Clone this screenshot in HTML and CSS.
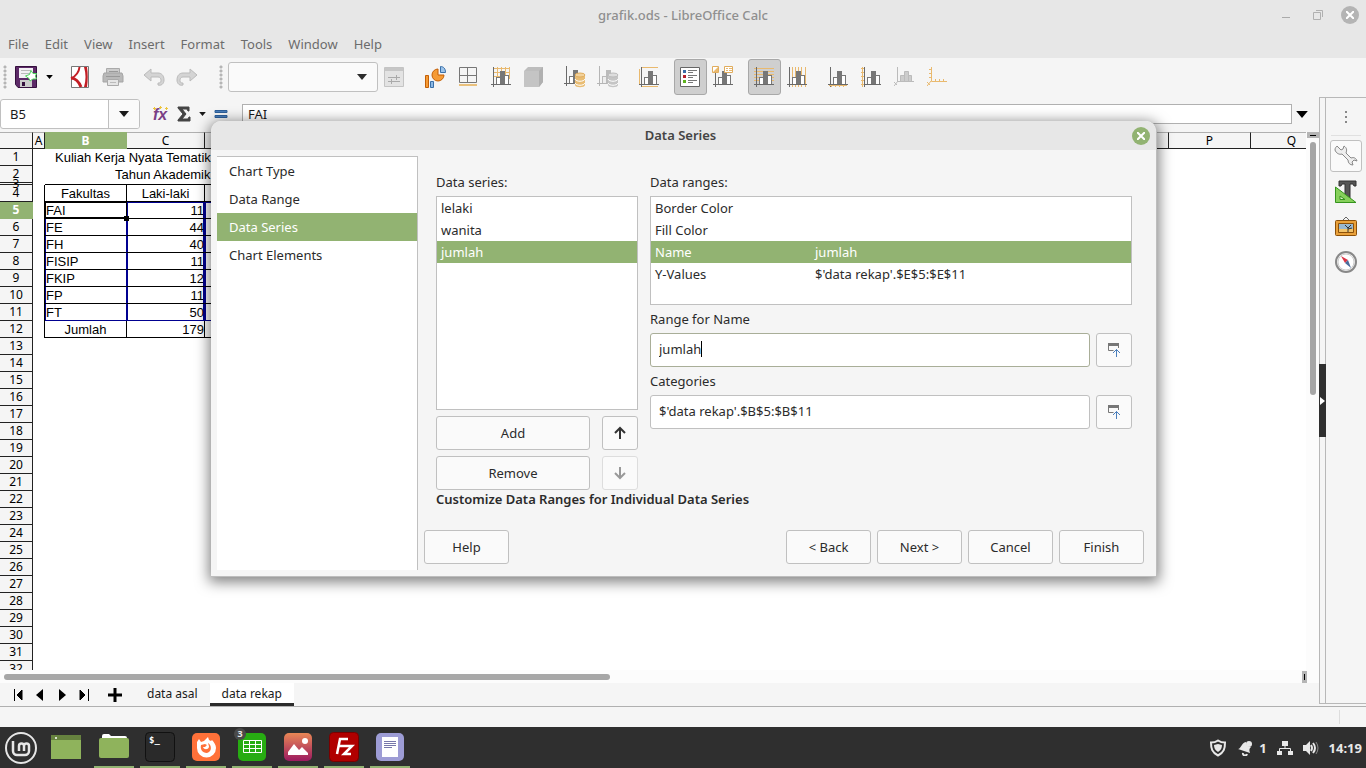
FILE: index.html
```html
<!DOCTYPE html>
<html lang="en">
<head>
    <meta charset="UTF-8">
    <meta name="viewport" content="width=device-width, initial-scale=1.0">
    <title>grafik.ods - LibreOffice Calc</title>
    <link rel="stylesheet" href="styles.css">
</head>
<body>
    <!-- shared icon shapes -->
    <svg class="defs" aria-hidden="true">
        <symbol id="bars" viewBox="0 0 20 20">
            <rect x="5.5" y="10.5" width="4" height="7" fill="#fff" stroke="#777"/>
            <rect x="13.5" y="8.5" width="4" height="9" fill="#fff" stroke="#777"/>
            <rect x="9" y="4" width="5" height="14" fill="#777"/>
            <path d="M2.5 0v20M0 17.5h20" stroke="#6a6a6a" fill="none"/>
        </symbol>
        <symbol id="bars-off" viewBox="0 0 20 20">
            <rect x="5.5" y="10.5" width="4" height="7" fill="#eee" stroke="#bbb"/>
            <rect x="13.5" y="8.5" width="4" height="9" fill="#ddd" stroke="#bbb"/>
            <rect x="9" y="4" width="5" height="14" fill="#bbb"/>
            <path d="M2.5 0v20M0 17.5h20" stroke="#b5b5b5" fill="none"/>
        </symbol>
        <symbol id="caret" viewBox="0 0 10 6"><path d="M0 0h10L5 6z" fill="currentColor"/></symbol>
        <symbol id="shrink" viewBox="0 0 14 14">
            <path d="M1.5 1v6.500h5M11.500 1v4" fill="none" stroke="#777"/>
            <path d="M1 0h11v3H1z" fill="#777"/>
            <path d="M9.500 14V6.500M6 10l3.500-3.500L13 10" fill="none" stroke="#4a7ebb"/>
        </symbol>
    </svg>

    <header class="titlebar">
        <span class="title">grafik.ods - LibreOffice Calc</span>
        <div class="window-buttons">
            <button type="button" aria-label="Minimize"><svg width="10" height="12"><path d="M1 8.5h8" stroke="#aaa"/></svg></button>
            <button type="button" aria-label="Restore"><svg width="10" height="12"><path d="M.5 3.5h7v7h-7zM3 1.5h6.5V8" fill="none" stroke="#b0b0b0"/></svg></button>
            <button type="button" class="close" aria-label="Close"><svg width="8" height="8"><path d="M0 0l8 8M8 0L0 8" stroke="#fff" stroke-width="2"/></svg></button>
        </div>
    </header>

    <nav class="menubar">
        <button type="button">File</button>
        <button type="button">Edit</button>
        <button type="button">View</button>
        <button type="button">Insert</button>
        <button type="button">Format</button>
        <button type="button">Tools</button>
        <button type="button">Window</button>
        <button type="button">Help</button>
    </nav>

    <div class="toolbar">
        <div class="tool-group first-group">
            <span class="grip"></span>
            <button type="button" class="tool" aria-label="Save">
                <svg width="22" height="22" viewBox="0 0 22 22"><path d="M.5.5h21v21H3l-2.500-3z" fill="#5d2a68" stroke="#35103e"/><path d="M4 2h14v10H4z" fill="#f3f1f4"/><path d="M6 4.5h10M6 7.5h10" stroke="#bbb"/><path d="M5 14h12v7H5z" fill="#ccc"/><path d="M7 16h3v4H7z" fill="#35103e"/><path d="M16 4.500l2 3h3.500l-1 2.500 1 3H18l-3 2-1-2.500L10.500 10l4-1.500z" fill="#fff" stroke="#4bd15b"/></svg>
            </button>
            <button type="button" class="drop" aria-label="Save options"><svg width="7" height="4"><use href="#caret"/></svg></button>
            <span class="sep"></span>
            <button type="button" class="tool" aria-label="Export as PDF">
                <svg width="20" height="22" viewBox="0 0 20 22"><path d="M1.5.5h17v21h-17z" fill="#fff" stroke="#777"/><path d="M9.500 1C9 6 6 10 1 12.500" fill="none" stroke="#c31f26" stroke-width="2"/><path d="M1 12c4 0 8 4 10 9" fill="none" stroke="#c31f26" stroke-width="3"/><path d="M14 1c2 7 2 13 0 20h3c1-7 1-13 0-20z" fill="#c31f26"/></svg>
            </button>
            <button type="button" class="tool" aria-label="Print">
                <svg width="22" height="20" viewBox="0 0 22 20"><path d="M4.5 1.500h13v6h-13z" fill="#ccc" stroke="#aaa"/><path d="M2 6h18l1 3v6H1V9z" fill="#b9b9b9" stroke="#a5a5a5"/><path d="M7 4.5h9M4 9.5h14" stroke="#999"/><path d="M5.500 12.500h11v6h-11z" fill="#e5e5e5" stroke="#aaa"/><path d="M8 15.5h6" stroke="#bbb"/></svg>
            </button>
            <span class="sep"></span>
            <button type="button" class="tool" aria-label="Undo">
                <svg width="22" height="18" viewBox="0 0 22 18"><path d="M8 1L1 7l7 6V9h7c3 0 3 3 3 4 0 2-2 2-3 2v2c3 1 6-1 6-5 0-5-3-7-6-7H8z" fill="#d4d4d4" stroke="#bbb"/></svg>
            </button>
            <button type="button" class="tool" aria-label="Redo">
                <svg width="22" height="18" viewBox="0 0 22 18"><path d="M14 1l7 6-7 6V9H7c-3 0-3 3-3 4 0 2 2 2 3 2v2c-3 1-6-1-6-5 0-5 3-7 6-7h7z" fill="#d4d4d4" stroke="#bbb"/></svg>
            </button>
        </div>
        <div class="tool-group">
            <span class="grip"></span>
            <div class="select-wrap">
                <select aria-label="Select chart element"><option></option></select>
                <svg width="10" height="6"><use href="#caret"/></svg>
            </div>
            <button type="button" class="tool" aria-label="Format selection" disabled>
                <svg width="20" height="20"><path d="M.5.5h19v19H.5z" fill="#e3e3e3" stroke="#c4c4c4"/><path d="M1 1h18v3H1z" fill="#c6c6c6"/><path d="M4 10.5h12M4 14.5h12M12.5 8v5M7.5 12v5" stroke="#aaa"/></svg>
            </button>
            <span class="sep"></span>
            <button type="button" class="tool" aria-label="Chart type">
                <svg width="22" height="22"><path d="M1.5 9.5h3v12h-3z" fill="#f59b35" stroke="#c35f06"/><path d="M6.5 15.5h3v6h-3z" fill="#8cb8e4" stroke="#3a70a8"/><path d="M14 3a6 6 0 1 0 6 6h-6z" fill="#f59b35" stroke="#c35f06"/><path d="M16.5 .5v6h5c0-4-2-6-5-6z" fill="#9cc3ea" stroke="#3a70a8"/></svg>
            </button>
            <button type="button" class="tool" aria-label="Chart area">
                <svg width="20" height="20"><path d="M1.5.5h17v15h-17zM9.5 1v15M1 8.5h18" fill="none" stroke="#777"/><path d="M1 18h18" stroke="#e9c07c" stroke-width="2"/></svg>
            </button>
            <button type="button" class="tool" aria-label="Chart wall">
                <svg width="20" height="20"><path d="M3 1.5h16M3 5.5h16M3 9.5h16M6.5 0v14M10.5 0v14M14.5 0v14M18.5 0v12" stroke="#e9b96e"/><use href="#bars"/></svg>
            </button>
            <button type="button" class="tool" aria-label="3D view" disabled>
                <svg width="20" height="20"><path d="M4 0h15v15l-4 5H1q-1 0-1-1V4z" fill="#bdbdbd"/><path d="M0 4h15v16H1q-1 0-1-1z" fill="#c4c4c4"/><path d="M15 4l4-4v15l-4 5z" fill="#b0b0b0"/></svg>
            </button>
            <span class="sep"></span>
            <button type="button" class="tool" aria-label="Data ranges">
                <svg width="22" height="22"><use href="#bars" width="20" height="20"/><path d="M11 9v10c0 3 10 3 10 0V9z" fill="#e9bd74"/><ellipse cx="16" cy="9" rx="5" ry="2" fill="#f2d29b" stroke="#e0ac5d"/><path d="M11 13c1 3 9 3 10 0M11 17c1 3 9 3 10 0" fill="none" stroke="#fff"/></svg>
            </button>
            <button type="button" class="tool" aria-label="Data table" disabled>
                <svg width="22" height="22"><use href="#bars-off" width="20" height="20"/><path d="M11 9v10c0 3 10 3 10 0V9z" fill="#c5c5c5"/><ellipse cx="16" cy="9" rx="5" ry="2" fill="#ddd" stroke="#bbb"/><path d="M11 13c1 3 9 3 10 0M11 17c1 3 9 3 10 0" fill="none" stroke="#fff"/></svg>
            </button>
            <span class="sep"></span>
            <button type="button" class="tool" aria-label="Titles">
                <svg width="20" height="20"><path d="M3 .5h16M3 19.5h16M.5 2v15" stroke="#e9b96e"/><use href="#bars"/></svg>
            </button>
            <span class="sep"></span>
            <button type="button" class="tool pressed" aria-label="Legend">
                <svg width="20" height="20"><path d="M.5.5h19v19H.5z" fill="#fff" stroke="#666"/><path d="M3 3h3v3H3z" fill="#3b6fa8"/><path d="M3 8h3v3H3z" fill="#b5222f"/><path d="M3 13h3v3H3z" fill="#5eb31e"/><path d="M8 3.5h9M8 5.5h5M8 8.5h9M8 10.5h5M8 13.5h9M8 15.5h5" stroke="#777"/></svg>
            </button>
            <button type="button" class="tool" aria-label="Data labels">
                <svg width="22" height="22"><use href="#bars" x="1" y="1" width="20" height="20"/><path d="M.5.5h6v6h-6zM12.5.5h8v6h-8z" fill="#fff" stroke="#e0ac5d"/><path d="M1 6l5-5v5z" fill="#e9b96e"/><path d="M14 2.5h2M14 4.5h2M17 2.5h3M17 4.5h3" stroke="#e9b96e"/></svg>
            </button>
            <span class="sep"></span>
            <button type="button" class="tool pressed" aria-label="Horizontal grids">
                <svg width="20" height="20"><path d="M0 1.5h20M0 4.5h20M0 7.5h20M0 10.5h20M0 13.5h20" stroke="#e9b96e"/><use href="#bars"/></svg>
            </button>
            <button type="button" class="tool" aria-label="Vertical grids">
                <svg width="20" height="20"><path d="M5.5 0v20M8.5 0v20M11.5 0v20M14.5 0v20M18.5 0v20" stroke="#e9b96e"/><use href="#bars"/></svg>
            </button>
            <span class="sep"></span>
            <button type="button" class="tool" aria-label="X axis">
                <svg width="20" height="20"><use href="#bars"/><path d="M1 18.5h18M3.5 18v2M7.5 18v2M11.5 18v2M15.5 18v2" stroke="#e9b96e"/></svg>
            </button>
            <button type="button" class="tool" aria-label="Y axis">
                <svg width="20" height="20"><use href="#bars" x="1" width="20" height="20"/><path d="M1.5 0v20M0 1.5h3M0 5.5h3M0 9.5h3M0 13.5h3M0 17.5h3" stroke="#e9b96e"/></svg>
            </button>
            <button type="button" class="tool" aria-label="Z axis" disabled>
                <svg width="20" height="20"><path d="M3.5 0v14.5H20M4 14l-4 5" fill="none" stroke="#bbb"/><path d="M6.5 8.5h4v6h-4zM10.5 4.5h4v10h-4zM14.5 8.5h3v6h-3z" fill="#ccc" stroke="#bbb"/><path d="M0 15l3 3" stroke="#bbb"/></svg>
            </button>
            <button type="button" class="tool" aria-label="All axes">
                <svg width="20" height="20"><path d="M4.5 0v14.5H20M4 14l-4 5M2 2.5h3M2 6.5h3M2 10.5h3M8.5 12v3M12.5 12v3M16.5 12v3M0 15l3 3" fill="none" stroke="#e9b96e"/></svg>
            </button>
        </div>
    </div>

    <div class="workspace">
        <main class="document">
            <div class="formula-bar">
                <div class="name-box">
                    <input type="text" value="B5" aria-label="Name box">
                    <button type="button" aria-label="Named ranges"><svg width="10" height="6"><use href="#caret"/></svg></button>
                </div>
                <div class="formula-tools">
                    <button type="button" aria-label="Function wizard"><svg width="18" height="18"><text x="1" y="15" class="fx">fx</text><path d="M1 3.500h3M7 2.500h3M13 3.500h3M2.500 2v3M8.500 1v3M14.500 2v3" stroke="#edc53d"/></svg></button>
                    <button type="button" aria-label="Sum"><svg width="14" height="16"><path d="M1 1h11v4h-1l-1-2H5l4 5-4 5h6l1-2h1v4H1v-1l5-6-5-6z" fill="#444" stroke="#444"/></svg></button>
                    <button type="button" class="narrow" aria-label="Sum options"><svg width="7" height="4"><use href="#caret"/></svg></button>
                    <button type="button" aria-label="Formula"><svg width="14" height="10"><path d="M1 1.5h12v2H1zM1 6.5h12v2H1z" fill="#4a7ebb" stroke="#2d5f99"/></svg></button>
                </div>
                <input type="text" class="formula-input" value="FAI" aria-label="Input line">
                <button type="button" class="expand" aria-label="Expand formula bar"><svg width="12" height="7"><use href="#caret"/></svg></button>
            </div>

            <div class="sheet-area">
                <div class="sheet">
                    <table>
                        <colgroup>
                            <col class="col-head"><col class="col-a"><col class="col-b"><col class="col-c"><col class="col-c"><col><col class="col-b"><col class="col-b">
                        </colgroup>
                        <thead>
                            <tr><th></th><th>A</th><th class="current">B</th><th>C</th><th></th><th></th><th>P</th><th>Q</th></tr>
                        </thead>
                        <tbody>
                            <tr><th>1</th><td></td><td colspan="3" class="heading">Kuliah Kerja Nyata Tematik</td></tr>
                            <tr><th>2</th><td></td><td colspan="3" class="heading subheading">Tahun Akademik</td></tr>
                            <tr class="collapsed"><th><span>3</span></th><td></td><td colspan="3"></td></tr>
                            <tr class="boxed top center"><th>4</th><td></td><td>Fakultas</td><td>Laki-laki</td><td></td></tr>
                            <tr class="boxed range range-top"><th class="current">5</th><td></td><td class="cursor">FAI</td><td>11</td><td></td></tr>
                            <tr class="boxed range"><th>6</th><td></td><td>FE</td><td>44</td><td></td></tr>
                            <tr class="boxed range"><th>7</th><td></td><td>FH</td><td>40</td><td></td></tr>
                            <tr class="boxed range"><th>8</th><td></td><td>FISIP</td><td>11</td><td></td></tr>
                            <tr class="boxed range"><th>9</th><td></td><td>FKIP</td><td>12</td><td></td></tr>
                            <tr class="boxed range"><th>10</th><td></td><td>FP</td><td>11</td><td></td></tr>
                            <tr class="boxed range range-bottom"><th>11</th><td></td><td>FT</td><td>50</td><td></td></tr>
                            <tr class="boxed total"><th>12</th><td></td><td>Jumlah</td><td>179</td><td></td></tr>
                            <tr><th>13</th></tr>
                            <tr><th>14</th></tr>
                            <tr><th>15</th></tr>
                            <tr><th>16</th></tr>
                            <tr><th>17</th></tr>
                            <tr><th>18</th></tr>
                            <tr><th>19</th></tr>
                            <tr><th>20</th></tr>
                            <tr><th>21</th></tr>
                            <tr><th>22</th></tr>
                            <tr><th>23</th></tr>
                            <tr><th>24</th></tr>
                            <tr><th>25</th></tr>
                            <tr><th>26</th></tr>
                            <tr><th>27</th></tr>
                            <tr><th>28</th></tr>
                            <tr><th>29</th></tr>
                            <tr><th>30</th></tr>
                            <tr><th>31</th></tr>
                            <tr><th>32</th></tr>
                        </tbody>
                    </table>
                </div>
                <div class="vscroll">
                    <span class="split"></span>
                    <span class="thumb"></span>
                </div>
            </div>
            <div class="hscroll">
                <span class="thumb"></span>
                <span class="split"></span>
            </div>
            <div class="sheet-tabs">
                <button type="button" aria-label="First sheet"><svg width="10" height="14"><path d="M1.5 1v12M9 2v10L4 7z" stroke="#000"/></svg></button>
                <button type="button" aria-label="Previous sheet"><svg width="10" height="14"><path d="M8 1v12L1 7z"/></svg></button>
                <button type="button" aria-label="Next sheet"><svg width="10" height="14"><path d="M2 1v12l7-6z"/></svg></button>
                <button type="button" aria-label="Last sheet"><svg width="10" height="14"><path d="M1 2v10l5-5zM9.5 1v12" stroke="#000"/></svg></button>
                <button type="button" class="add-sheet" aria-label="Add sheet"><svg width="16" height="16"><path d="M8 1v14M1 8h14" stroke="#000" stroke-width="3"/></svg></button>
                <button type="button" class="tab">data asal</button>
                <button type="button" class="tab active">data rekap</button>
            </div>
        </main>
        <div class="splitter">
            <button type="button" aria-label="Hide sidebar"><svg width="5" height="8"><path d="M0 0v8l5-4z" fill="#fff"/></svg></button>
        </div>
        <aside class="sidebar">
            <button type="button" class="more" aria-label="Sidebar settings"><svg width="3" height="14"><path d="M0 1h2v2H0zM0 6h2v2H0zM0 11h2v2H0z" fill="#888"/></svg></button>
            <button type="button" class="deck selected" aria-label="Properties">
                <svg width="24" height="24"><path d="M3 2l4 4 2-1 1-3c3 2 3 4 2 7l5 5c3-1 5 0 6 3l-3-1-2 2 1 3c-3 0-5-2-5-5l-6-6c-3 1-6-1-7-4 0-2 1-3 2-4z" fill="#eee" stroke="#888"/></svg>
            </button>
            <button type="button" class="deck" aria-label="Styles">
                <svg width="24" height="24"><path d="M5 1h17v5h-2l-1-2h-3v14h-5V4H8L7 6H5z" fill="#555" stroke="#333"/><path d="M1.5 7v15.5H22z" fill="#86d05b" stroke="#35941d"/><path d="M6 16v3.5h5z" fill="#d9f0c8" stroke="#35941d"/></svg>
            </button>
            <button type="button" class="deck" aria-label="Gallery">
                <svg width="24" height="22"><path d="M8 5l4-4 4 4" fill="none" stroke="#666"/><rect x="1.5" y="4.5" width="21" height="15" rx="1" fill="#e9a13b" stroke="#8c5009"/><path d="M4.5 7.5h15v9h-15z" fill="#98b7cf" stroke="#8c5009"/><path d="M5 13h14v3H5z" fill="#f2c268"/><path d="M14 16v-4l-3-3M14 12l3-3M14 13l4-1" fill="none" stroke="#333"/></svg>
            </button>
            <button type="button" class="deck" aria-label="Navigator">
                <svg width="24" height="24"><circle cx="12" cy="12" r="10" fill="#f5f5f5" stroke="#888" stroke-width="2"/><circle cx="12" cy="12" r="8" fill="#fff" stroke="#ccc"/><path d="M7 6l7 4-3 3z" fill="#dc3445"/><path d="M17 18l-3-8-3 3z" fill="#4a6c9c"/></svg>
            </button>
        </aside>
    </div>

    <footer class="statusbar"></footer>

    <div class="taskbar">
        <button type="button" class="menu" aria-label="Menu">
            <svg width="34" height="34"><circle cx="17" cy="17" r="15" fill="none" stroke="#e6e6e6" stroke-width="2"/><path d="M9 10v10a4 4 0 0 0 4 4h8a4 4 0 0 0 4-4v-5a2.500 2.500 0 0 0-5 0v5M20 15a2.500 2.500 0 0 0-5 0v5" fill="none" stroke="#e6e6e6" stroke-width="2.500"/></svg>
        </button>
        <button type="button" class="task plain" aria-label="Show desktop">
            <svg width="30" height="24"><path d="M0 0h30v24H0z" fill="#8fb35c"/><path d="M0 0h30v5H0z" fill="#66823f"/><circle cx="5" cy="3" r="1" fill="#fff"/></svg>
        </button>
        <button type="button" class="task" aria-label="Files">
            <svg width="30" height="26"><path d="M3 6V2q0-2 2-2h5l2 2h14q2 0 2 2v2z" fill="#fff"/><path d="M0 6q0-2 2-2h26q2 0 2 2v16q0 2-2 2H2q-2 0-2-2z" fill="#8fb35c"/></svg>
        </button>
        <button type="button" class="task" aria-label="Terminal">
            <svg width="30" height="30"><rect x=".5" y=".5" width="29" height="29" rx="4" fill="#2a2a2a" stroke="#111"/><text x="4" y="11" class="prompt">$_</text></svg>
        </button>
        <button type="button" class="task" aria-label="Firefox">
            <svg width="28" height="28"><rect width="28" height="28" rx="5" fill="#ff7139"/><path d="M5 9l2-3 2 3 3-1 4-4 1 3 2 1 1-1c2 2 4 5 4 8a9.500 9.500 0 0 1-19 0c0-2 0-4 0-6z" fill="#fff"/><path d="M9 12l4-1 2 1-2 2h-2c1 3 5 3 6 0 0-2-1-3-1-4 4 2 4 9-1 10-5 0-7-4-6-8z" fill="#ff7139"/></svg>
        </button>
        <button type="button" class="task" aria-label="LibreOffice Calc">
            <svg width="28" height="28"><rect width="28" height="28" rx="5" fill="#27ac12"/><path d="M5.5 7.5h18v12h-18zM5.5 11.5h18M5.5 15.5h18M11.5 7v13M17.5 7v13" fill="none" stroke="#fff"/></svg>
            <span class="badge">3</span>
        </button>
        <button type="button" class="task" aria-label="Image viewer">
            <svg width="28" height="28"><defs><linearGradient id="sunset" x2="0" y2="1"><stop stop-color="#e98755"/><stop offset="1" stop-color="#9c1a60"/></linearGradient></defs><rect width="28" height="28" rx="5" fill="url(#sunset)"/><circle cx="21" cy="8" r="3" fill="#fff"/><path d="M4 22v-3l6-8 5 6 3-3 6 6v2z" fill="#fff"/></svg>
        </button>
        <button type="button" class="task" aria-label="FileZilla">
            <svg width="30" height="30"><rect x=".5" y=".5" width="29" height="29" rx="4" fill="#b00000" stroke="#790000"/><path d="M8 22l3-15h8M9 14h8M15 14h8l-8 8h7" fill="none" stroke="#fff" stroke-width="2.500"/></svg>
        </button>
        <button type="button" class="task" aria-label="LibreOffice Writer">
            <svg width="28" height="28"><rect width="28" height="28" rx="5" fill="#9d9cd5"/><path d="M6 4h16v20H6z" fill="#fff"/><path d="M8 8.5h12M8 10.5h12M8 12.5h12M8 14.5h8" stroke="#77a"/></svg>
        </button>
        <div class="tray">
            <svg width="18" height="18"><path d="M9 1.5c3 2 5 2 7 2 0 6-1 10-7 13-6-3-7-7-7-13 2 0 4 0 7-2z" fill="none" stroke="#e8e8e8" stroke-width="2"/><path d="M9 5l4 1c0 3-1 5-4 7-3-2-4-4-4-7z" fill="#e8e8e8"/></svg>
            <span class="notify"><svg width="16" height="16"><path d="M1 9c3 0 3-6 8-7 0 3 2 5 5 5-2 2-2 3-1 6z" fill="#e8e8e8"/><circle cx="12" cy="4" r="3" fill="#e8e8e8"/><path d="M6 13a2 2 0 0 0 4 1" fill="none" stroke="#e8e8e8" stroke-width="2"/></svg>1</span>
            <svg width="16" height="16"><path d="M5 1h6v5H5zM0 11h5v4H0zM11 11h5v4h-5z" fill="#e8e8e8"/><path d="M8 5v4M2.5 11V8.5h11V11" fill="none" stroke="#e8e8e8"/></svg>
            <svg width="16" height="16"><path d="M0 5h3l4-4v14l-4-4H0z" fill="#e8e8e8"/><path d="M8 5q2 3 0 6M10 3q4 5 0 10" fill="none" stroke="#e8e8e8" stroke-width="2"/><path d="M13 2q4 6 0 12" fill="none" stroke="#888"/></svg>
            <span>14:19</span>
        </div>
    </div>

    <section class="dialog" role="dialog" aria-labelledby="dialogTitle">
        <div class="dialog-title">
            <h1 id="dialogTitle">Data Series</h1>
            <button type="button" class="close" aria-label="Close dialog"><svg width="8" height="8"><path d="M0 0l8 8M8 0L0 8" stroke="#fff" stroke-width="2"/></svg></button>
        </div>
        <div class="dialog-body">
            <ul class="steps">
                <li>Chart Type</li>
                <li>Data Range</li>
                <li class="selected">Data Series</li>
                <li>Chart Elements</li>
            </ul>
            <form class="page">
                <div class="columns">
                    <div class="series">
                        <label id="seriesLabel">Data series:</label>
                        <ul class="listbox" role="listbox" aria-labelledby="seriesLabel">
                            <li role="option">lelaki</li>
                            <li role="option">wanita</li>
                            <li role="option" class="selected" aria-selected="true">jumlah</li>
                        </ul>
                        <div class="series-buttons">
                            <button type="button" class="button">Add</button>
                            <button type="button" class="button" aria-label="Move up"><svg width="14" height="14"><path d="M7 13V2M2 7l5-5 5 5" fill="none" stroke="#333" stroke-width="2"/></svg></button>
                            <button type="button" class="button">Remove</button>
                            <button type="button" class="button" aria-label="Move down" disabled><svg width="14" height="14"><path d="M7 1v11M2 7l5 5 5-5" fill="none" stroke="#999" stroke-width="2"/></svg></button>
                        </div>
                    </div>
                    <div class="ranges">
                        <label id="rangesLabel">Data ranges:</label>
                        <div class="listbox">
                            <table aria-labelledby="rangesLabel">
                                <tr><td>Border Color</td><td></td></tr>
                                <tr><td>Fill Color</td><td></td></tr>
                                <tr class="selected"><td>Name</td><td>jumlah</td></tr>
                                <tr><td>Y-Values</td><td>$'data rekap'.$E$5:$E$11</td></tr>
                            </table>
                        </div>
                        <label for="rangeName">Range for Name</label>
                        <div class="field">
                            <div class="focused"><input type="text" id="rangeName" value="jumlah"><span class="text-cursor"></span></div>
                            <button type="button" class="button" aria-label="Select range"><svg width="14" height="14"><use href="#shrink"/></svg></button>
                        </div>
                        <label for="categories">Categories</label>
                        <div class="field">
                            <div><input type="text" id="categories" value="$'data rekap'.$B$5:$B$11"></div>
                            <button type="button" class="button" aria-label="Select categories"><svg width="14" height="14"><use href="#shrink"/></svg></button>
                        </div>
                    </div>
                </div>
                <p class="caption">Customize Data Ranges for Individual Data Series</p>
                <div class="actions">
                    <button type="button" class="button help">Help</button>
                    <button type="button" class="button">&lt; Back</button>
                    <button type="button" class="button">Next &gt;</button>
                    <button type="button" class="button">Cancel</button>
                    <button type="button" class="button">Finish</button>
                </div>
            </form>
        </div>
    </section>
</body>
</html>
```

FILE: styles.css
```css
* {
    box-sizing: border-box;
}
body {
    margin: 0;
    height: 100vh;
    display: flex;
    flex-direction: column;
    overflow: hidden;
    background: #f5f5f5;
    color: #2b2b2b;
    font-family: "Noto Sans", sans-serif;
    font-size: 13px;
}
button, input, select {
    font: inherit;
    color: inherit;
    margin: 0;
}
button {
    padding: 0;
    border: 0;
    background: none;
    display: flex;
    align-items: center;
    justify-content: center;
}
svg {
    display: block;
    flex: none;
}
ul {
    list-style: none;
    margin: 0;
    padding: 0;
}
.defs {
    position: absolute;
    width: 0;
    height: 0;
}

/* title and menu */
.titlebar {
    flex: none;
    height: 30px;
    display: grid;
    grid-template-columns: 1fr auto 1fr;
    align-items: center;
    background: #e7e7e7;
    color: #8f8f8f;
}
.title {
    grid-column: 2;
    font-weight: 500;
}
.window-buttons {
    justify-self: end;
    display: flex;
    align-items: center;
    gap: 22px;
    padding-right: 7px;
}
.close {
    width: 18px;
    height: 18px;
    border-radius: 50%;
    background: #b4b4b4;
}
.window-buttons .close {
    margin-left: -4px;
}
.menubar {
    flex: none;
    height: 28px;
    display: flex;
    align-items: center;
    gap: 16px;
    padding: 0 8px;
    background: #e7e7e7;
    color: #6c6c6c;
}

/* toolbar */
.toolbar {
    flex: none;
    height: 39px;
    display: flex;
    padding-bottom: 1px;
}
.tool-group {
    display: flex;
    align-items: center;
}
.first-group {
    margin-right: 12px;
}
.grip {
    width: 10px;
    height: 24px;
    background: radial-gradient(circle, #b5b5b5 1px, transparent 2px) 3px 0 / 4px 4px repeat-y;
}
.tool {
    width: 33px;
    height: 36px;
}
.tool svg {
    margin-left: -1px;
}
.tool.pressed {
    border: 1px solid #a8a8a8;
    border-radius: 3px;
    background: #cfcfcf;
}
.drop {
    width: 13px;
    height: 36px;
    color: #000;
}
.sep {
    width: 8px;
}
.select-wrap {
    position: relative;
    margin-left: 2px;
}
.select-wrap select {
    display: block;
    width: 150px;
    height: 30px;
    border: 1px solid #c0c0c0;
    border-radius: 3px;
    background: #fafafa;
    appearance: none;
}
.select-wrap svg {
    position: absolute;
    top: 12px;
    right: 11px;
    pointer-events: none;
}

/* workspace */
.workspace {
    flex: 1;
    min-height: 0;
    display: flex;
}
.document {
    flex: 1;
    min-width: 0;
    display: flex;
    flex-direction: column;
}
.formula-bar {
    flex: none;
    height: 35px;
    display: flex;
    align-items: center;
    padding-bottom: 1px;
    color: #1a1a1a;
}
.name-box {
    width: 140px;
    height: 30px;
    display: flex;
    border: 1px solid #c0c0c0;
    border-radius: 3px;
    background: #fff;
    overflow: hidden;
}
.name-box input {
    flex: 1;
    min-width: 0;
    border: 0;
    padding: 0 9px;
    background: none;
}
.name-box button {
    width: 31px;
    border-left: 1px solid #c0c0c0;
    background: #fafafa;
}
.formula-tools {
    display: flex;
    align-items: center;
    padding: 0 10px 0 9px;
}
.formula-tools button {
    width: 23px;
    height: 24px;
}
.formula-tools .narrow {
    width: 14px;
}
.fx {
    font: italic bold 16px "Liberation Sans", sans-serif;
    fill: #7a3f86;
}
.formula-input {
    flex: 1;
    min-width: 0;
    height: 20px;
    border: 1px solid #b0b0b0;
    padding: 0 5px;
    background: #fff;
}
.expand {
    width: 20px;
    margin-right: 7px;
    color: #000;
}

/* sheet */
.sheet-area {
    flex: 1;
    min-height: 0;
    display: flex;
}
.sheet {
    flex: 1;
    min-width: 0;
    overflow: hidden;
    background: #fff;
}
.sheet table {
    width: calc(100% + 27px);
    table-layout: fixed;
    border-spacing: 0;
    color: #000;
}
.col-head {
    width: 33px;
}
.col-a {
    width: 12px;
}
.col-b {
    width: 82px;
}
.col-c {
    width: 78px;
}
.sheet tr {
    height: 17px;
}
.sheet th, .sheet td {
    height: 17px;
    padding: 0;
    line-height: 16px;
    white-space: nowrap;
}
.sheet th {
    border-right: 1px solid #222;
    border-bottom: 1px solid #222;
    background: #f5f5f5;
    font-size: 12px;
    font-weight: normal;
}
.sheet thead th {
    border-top: 1px solid #b0b0b0;
    line-height: 15px;
}
.sheet th.current {
    background: #92b372;
    border-color: #92b372;
    color: #fff;
    font-weight: bold;
}
.sheet td {
    font-family: "Liberation Sans", sans-serif;
}
.sheet td.heading {
    padding-left: 10px;
}
.sheet td.subheading {
    padding-left: 70px;
}
.sheet .collapsed, .sheet .collapsed th, .sheet .collapsed td {
    height: 2px;
    line-height: 1px;
}
.collapsed span {
    display: block;
    height: 1px;
}
.sheet .boxed td {
    padding-top: 2px;
    border-right: 1px solid #000;
    border-bottom: 1px solid #000;
    line-height: 14px;
}
.sheet .boxed td:nth-child(2) {
    border-bottom: 0;
}
.boxed.top td:nth-child(n+3) {
    box-shadow: 0 -1px #000;
}
.center td {
    text-align: center;
}
.range td:nth-child(3) {
    padding-left: 1px;
    box-shadow: inset 1px 0 #000090;
}
.range td:nth-child(4) {
    text-align: right;
    box-shadow: inset 1px 0 #000090, inset -1px 0 #000090;
}
.range td:nth-child(5) {
    box-shadow: inset 1px 0 #000090;
}
.sheet .range td:nth-child(n+3) {
    border-right-color: #000090;
}
.range-top td:nth-child(4) {
    box-shadow: inset 1px 1px #000090, inset -1px 0 #000090;
}
.range-top td:nth-child(5) {
    box-shadow: inset 1px 1px #000090;
}
.sheet .range-bottom td:nth-child(n+3) {
    border-bottom-color: #000090;
}
.total td:nth-child(3) {
    text-align: center;
}
.total td:nth-child(4) {
    text-align: right;
}
.sheet .range td.cursor {
    position: relative;
    box-shadow: inset 1px 0 #000, inset 0 1px #000, 0 -1px #000, inset 0 -1px #000;
    border-right-color: #000;
}
.cursor::after {
    content: "";
    position: absolute;
    right: -3px;
    bottom: -3px;
    width: 5px;
    height: 5px;
    background: #000;
}

/* scrollbars */
.vscroll {
    width: 13px;
    padding-left: 1px;
    background: #fcfcfc;
}
.vscroll span {
    display: block;
}
.vscroll .split {
    height: 6px;
    background: linear-gradient(#000, #000) center / 6px 1px no-repeat #b5b5b5;
}
.vscroll .thumb {
    width: 6px;
    height: 47%;
    margin: 4px 3px 0;
    border-radius: 3px;
    background: #a6a6a6;
}
.hscroll {
    flex: none;
    height: 13px;
    display: flex;
    align-items: center;
    justify-content: space-between;
    padding: 0 12px 0 4px;
    background: #fcfcfc;
}
.hscroll .thumb {
    width: 46.5%;
    height: 6px;
    border-radius: 3px;
    background: #a6a6a6;
}
.hscroll .split {
    width: 5px;
    height: 12px;
    background: linear-gradient(#000, #000) center / 1px 6px no-repeat #b5b5b5;
}
.sheet-tabs {
    flex: none;
    height: 23px;
    display: flex;
    align-items: stretch;
    padding-left: 7px;
    color: #1a1a1a;
    font-size: 12px;
}
.sheet-tabs button {
    width: 22px;
}
.sheet-tabs .add-sheet {
    width: 40px;
}
.sheet-tabs .tab {
    width: auto;
    padding: 0 12px;
    border-bottom: 3px solid transparent;
}
.sheet-tabs .tab.active {
    border-bottom-color: #2b2b2b;
    background: #fff;
}

/* sidebar */
.splitter {
    width: 7px;
    margin-bottom: 2px;
    display: flex;
    align-items: center;
    border: 1px solid #b8b8b8;
}
.splitter button {
    flex: none;
    width: 7px;
    height: 73px;
    margin-left: -1px;
    background: #2f2f2f;
}
.sidebar {
    width: 40px;
    margin-bottom: 2px;
    display: flex;
    flex-direction: column;
    align-items: center;
    gap: 4px;
    border: solid #b8b8b8;
    border-width: 1px 0;
}
.more {
    width: 30px;
    height: 38px;
    border-bottom: 1px solid #e0e0e0;
}
.deck {
    width: 32px;
    height: 31px;
}
.deck.selected {
    height: 32px;
    border: 1px solid #c0c0c0;
    border-radius: 3px;
    background: #fafafa;
}
.statusbar {
    flex: none;
    height: 21px;
    border-top: 1px solid #b0b0b0;
    background: linear-gradient(#ddd, #ddd) right 26px center / 1px 14px no-repeat;
}

/* taskbar */
.taskbar {
    flex: none;
    height: 41px;
    display: flex;
    gap: 6px;
    background: #2f2f2f;
    color: #e8e8e8;
}
.menu {
    width: 42px;
}
.task {
    position: relative;
    width: 40px;
    border-bottom: 2px solid #92b372;
}
.task.plain {
    width: 36px;
    margin-right: 4px;
    border-color: transparent;
}
.prompt {
    font: bold 9px "DejaVu Sans Mono", monospace;
    fill: #fff;
}
.badge {
    position: absolute;
    top: 1px;
    left: 2px;
    width: 12px;
    height: 12px;
    border-radius: 50%;
    background: #4a4a4a;
    font-size: 9px;
    font-weight: bold;
    line-height: 12px;
    text-align: center;
}
.tray {
    margin-left: auto;
    display: flex;
    align-items: center;
    gap: 10px;
    padding-right: 4px;
    font-weight: bold;
}
.notify {
    display: flex;
    align-items: center;
    gap: 6px;
}

/* dialog */
.dialog {
    position: absolute;
    top: 121px;
    left: 211px;
    right: 209px;
    display: flex;
    flex-direction: column;
    border: 1px solid #bdbdbd;
    border-width: 0 1px 1px 0;
    border-radius: 10px 10px 0 0;
    background: #f5f5f5;
    box-shadow: 0 3px 14px 2px rgba(0, 0, 0, 0.5);
}
.dialog-title {
    height: 29px;
    display: grid;
    grid-template-columns: 1fr auto 1fr;
    align-items: center;
    padding-right: 6px;
    border-radius: 10px 10px 0 0;
    background: #e7e7e7;
}
.dialog-title h1 {
    grid-column: 2;
    margin: 0;
    color: #444;
    font-size: 13px;
    font-weight: 600;
    line-height: 17px;
}
.dialog-title .close {
    justify-self: end;
    background: #92b372;
}
.dialog-body {
    display: flex;
    gap: 6px;
    padding: 6px;
}
.steps {
    width: 201px;
    border: solid #c0c0c0;
    border-width: 1px 1px 0 0;
    background: #fff;
}
.steps li {
    padding: 0 12px;
    line-height: 28px;
}
.selected {
    background-color: #92b372;
    color: #fff;
}
.page {
    flex: 1;
    min-width: 0;
    padding: 17px 6px 6px 0;
}
.columns {
    display: flex;
    gap: 12px;
    padding: 0 12px;
}
.columns label {
    display: block;
    line-height: 18px;
}
.series {
    width: 202px;
}
.ranges {
    flex: 1;
}
.listbox {
    margin: 5px 0 6px;
    border: 1px solid #c0c0c0;
    background: #fff;
}
.series .listbox {
    height: 214px;
}
.ranges .listbox {
    height: 109px;
    margin-bottom: 5px;
}
.listbox li {
    padding: 0 4px;
    line-height: 22px;
}
.listbox table {
    width: 100%;
    border-spacing: 0;
}
.listbox td {
    height: 22px;
    padding: 0 4px;
    line-height: 22px;
}
.listbox td:first-child {
    width: 160px;
}
.button {
    height: 34px;
    border: 1px solid #c0c0c0;
    border-radius: 3px;
    background: #fafafa;
}
.button:disabled {
    border-color: #ddd;
}
.series-buttons {
    display: grid;
    grid-template-columns: 154px 36px;
    column-gap: 12px;
    row-gap: 6px;
}
.field {
    display: flex;
    gap: 6px;
    margin: 5px 0;
}
.field div {
    flex: 1;
    position: relative;
}
.field input {
    display: block;
    width: 100%;
    height: 34px;
    padding: 0 8px 2px;
    border: 1px solid #c0c0c0;
    border-radius: 3px;
    background: #fff;
}
.field .focused input {
    border-color: #a9ae98;
}
.text-cursor {
    position: absolute;
    left: 51px;
    top: 8px;
    width: 1px;
    height: 16px;
    background: #000;
}
.field .button {
    width: 36px;
}
.caption {
    margin: 0 12px;
    font-size: 13px;
    font-weight: 600;
    line-height: 18px;
}
.actions {
    display: flex;
    gap: 6px;
    margin-top: 22px;
}
.actions .button {
    width: 85px;
}
.actions .help {
    margin-right: auto;
}
```
